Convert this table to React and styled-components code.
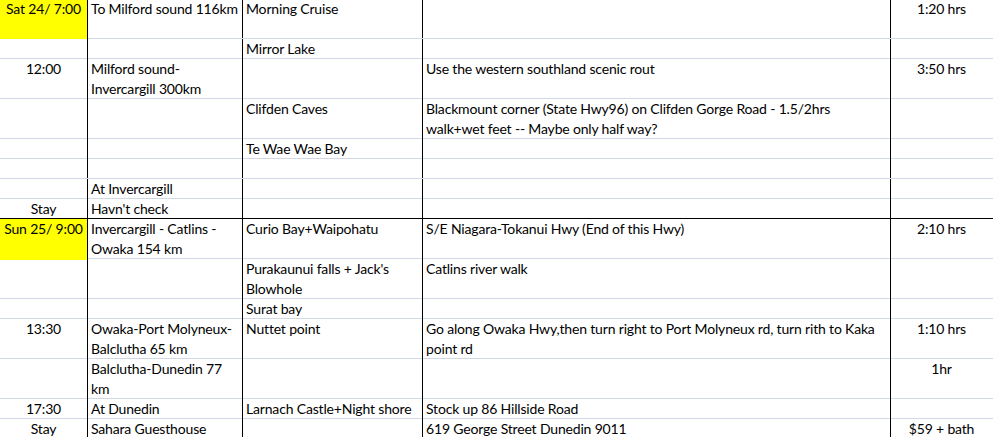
import React from "react";
import styled, { createGlobalStyle } from "styled-components";

const GlobalStyle = createGlobalStyle`
  html, body {
    margin: 0;
    padding: 0;
    background: #ffffff;
  }
`;

const Sheet = styled.div`
  margin-top: -1px;
  width: 993px;
  height: 438px;
  overflow: hidden;
  font-family: Lato, "Liberation Sans", sans-serif;
  font-size: 14px;
  letter-spacing: -0.17px;
  color: #000000;
`;

const Row = styled.div`
  display: grid;
  grid-template-columns: 88px 155px 180px 468px 1fr;
  height: ${({ lines }) => lines * 20}px;
  border-bottom: 1px solid ${({ divider }) => (divider ? "#000000" : "#d0d7e5")};
  box-sizing: border-box;
`;

const Cell = styled.div`
  box-sizing: border-box;
  padding: 0 3px;
  line-height: 20px;
  white-space: nowrap;
  text-align: ${({ center }) => (center ? "center" : "left")};
  background: ${({ fill }) => fill || "transparent"};
  border-right: 1px solid ${({ last }) => (last ? "transparent" : "#000000")};
  margin-bottom: ${({ fill }) => (fill ? "-1px" : "0")};
`;

const Line = styled.div`
  height: 20px;
`;

const rows = [
  { lines: 2, cells: [["Sat 24/ 7:00"], ["To Milford sound 116km"], ["Morning Cruise"], [], ["1:20 hrs"]], fill: true },
  { lines: 1, cells: [[], [], ["Mirror Lake"], [], []] },
  { lines: 2, cells: [["12:00"], ["Milford sound-", "Invercargill 300km"], [], ["Use the western southland scenic rout"], ["3:50 hrs"]] },
  {
    lines: 2,
    cells: [[], [], ["Clifden Caves"], ["Blackmount corner (State Hwy96) on Clifden Gorge Road - 1.5/2hrs", "walk+wet feet -- Maybe only half way?"], []],
  },
  { lines: 1, cells: [[], [], ["Te Wae Wae Bay"], [], []] },
  { lines: 1, cells: [[], [], [], [], []] },
  { lines: 1, cells: [[], ["At Invercargill"], [], [], []] },
  { lines: 1, cells: [["Stay"], ["Havn't check"], [], [], []], divider: true },
  {
    lines: 2,
    cells: [["Sun 25/ 9:00"], ["Invercargill - Catlins -", "Owaka 154 km"], ["Curio Bay+Waipohatu"], ["S/E Niagara-Tokanui Hwy (End of this Hwy)"], ["2:10 hrs"]],
    fill: true,
  },
  { lines: 2, cells: [[], [], ["Purakaunui falls + Jack's", "Blowhole"], ["Catlins river walk"], []] },
  { lines: 1, cells: [[], [], ["Surat bay"], [], []] },
  {
    lines: 2,
    cells: [
      ["13:30"],
      ["Owaka-Port Molyneux-", "Balclutha 65 km"],
      ["Nuttet point"],
      ["Go along Owaka Hwy,then turn right to Port Molyneux rd, turn rith to Kaka", "point rd"],
      ["1:10 hrs"],
    ],
  },
  { lines: 2, cells: [[], ["Balclutha-Dunedin 77", "km"], [], [], ["1hr"]] },
  { lines: 1, cells: [["17:30"], ["At Dunedin"], ["Larnach Castle+Night shore"], ["Stock up 86 Hillside Road"], []] },
  { lines: 1, cells: [["Stay"], ["Sahara Guesthouse"], [], ["619 George Street Dunedin 9011"], ["$59 + bath"]] },
];

function App() {
  return (
    <>
      <GlobalStyle />
      <Sheet>
        {rows.map((row, r) => (
          <Row key={r} lines={row.lines} divider={row.divider}>
            {row.cells.map((text, c) => (
              <Cell
                key={c}
                center={c === 0 || c === 4}
                last={c === 4}
                fill={row.fill && c === 0 ? "#ffff00" : null}
              >
                {text.map((t, i) => (
                  <Line key={i}>{t}</Line>
                ))}
              </Cell>
            ))}
          </Row>
        ))}
      </Sheet>
    </>
  );
}

export default App;
